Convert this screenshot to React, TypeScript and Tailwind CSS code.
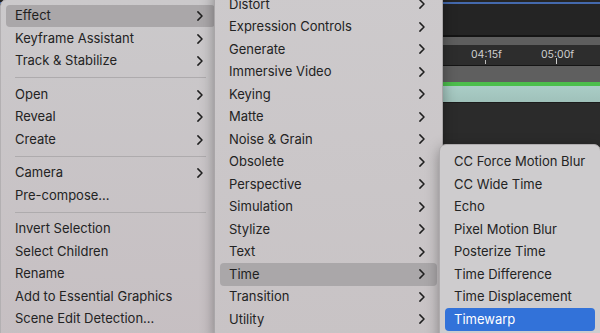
import React from "react";

type Item =
  | { label: string; sub?: boolean; hl?: "gray" | "blue" }
  | "sep";

const menuOne: Item[] = [
  { label: "Effect", sub: true, hl: "gray" },
  { label: "Keyframe Assistant", sub: true },
  { label: "Track & Stabilize", sub: true },
  "sep",
  { label: "Open", sub: true },
  { label: "Reveal", sub: true },
  { label: "Create", sub: true },
  "sep",
  { label: "Camera", sub: true },
  { label: "Pre-compose..." },
  "sep",
  { label: "Invert Selection" },
  { label: "Select Children" },
  { label: "Rename" },
  { label: "Add to Essential Graphics" },
  { label: "Scene Edit Detection..." },
];

const menuTwo: Item[] = [
  "Distort",
  "Expression Controls",
  "Generate",
  "Immersive Video",
  "Keying",
  "Matte",
  "Noise & Grain",
  "Obsolete",
  "Perspective",
  "Simulation",
  "Stylize",
  "Text",
  "Time",
  "Transition",
  "Utility",
].map((label) => ({ label, sub: true, hl: label === "Time" ? ("gray" as const) : undefined }));

const menuThree: Item[] = [
  "CC Force Motion Blur",
  "CC Wide Time",
  "Echo",
  "Pixel Motion Blur",
  "Posterize Time",
  "Time Difference",
  "Time Displacement",
  "Timewarp",
].map((label) => ({ label, hl: label === "Timewarp" ? ("blue" as const) : undefined }));

function Chevron({ white }: { white?: boolean }) {
  return (
    <svg width="6" height="10" viewBox="0 0 6 10" fill="none" className="shrink-0">
      <path
        d="M0.9 0.9L5 5L0.9 9.1"
        stroke={white ? "#fff" : "#1f1f1f"}
        strokeWidth="1.5"
        strokeLinecap="round"
        strokeLinejoin="round"
      />
    </svg>
  );
}

function MenuRows({ items }: { items: Item[] }) {
  return (
    <>
      {items.map((it, i) =>
        it === "sep" ? (
          <div key={i} className="h-[11px] flex items-center px-[14px]">
            <div className="h-px w-full bg-[#aeabad]" />
          </div>
        ) : (
          <div
            key={i}
            className={
              "h-[22.5px] mx-[5px] pl-[9px] pr-[12px] flex items-center justify-between rounded-[4px] " +
              (it.hl === "gray"
                ? "bg-[#aaa7a9] text-[#1f1f1f]"
                : it.hl === "blue"
                ? "bg-[#3272d9] text-white"
                : "text-[#232323]")
            }
          >
            <span className="whitespace-nowrap">{it.label}</span>
            {it.sub && <Chevron white={it.hl === "blue"} />}
          </div>
        )
      )}
    </>
  );
}

export default function App() {
  return (
    <div
      className="relative w-[600px] h-[333px] overflow-hidden bg-[#2a2a2a] text-[13px]"
      style={{ fontFamily: "Inter, 'Noto Sans', sans-serif" }}
    >
      {/* timeline behind the menus */}
      <div className="flex flex-col">
        <div className="h-[2px] bg-[#252525]" />
        <div className="h-[1.5px] bg-[#4469ad]" />
        <div className="h-[31.5px] bg-[#242424]" />
        <div className="h-[2px] bg-[#141414]" />
        <div className="h-[8px] bg-[#5e5e5e]" />
        <div className="relative h-[20px] bg-[#2d2d2d]">
          <span className="absolute left-[471px] top-[2px] text-[10.5px] text-[#cfcfcf]">04:15f</span>
          <span className="absolute left-[541px] top-[2px] text-[10.5px] text-[#cfcfcf]">05:00f</span>
          <div className="absolute left-[485px] top-[15px] w-px h-[4px] bg-[#bdbdbd]" />
          <div className="absolute left-[556px] top-[13px] w-px h-[6px] bg-[#d0d0d0]" />
        </div>
        <div className="h-px bg-[#151515]" />
        <div className="h-[16px] bg-[#5f5f5f]" />
        <div className="h-[4px] bg-[#4cbe4c]" />
        <div className="h-[16px] bg-gradient-to-b from-[#aacdc6] to-[#9fc1ba]" />
        <div className="h-px bg-[#1c1c1c]" />
        <div className="h-[230px] bg-[#2b2b2b]" />
      </div>

      {/* first context menu */}
      <div className="absolute left-0 top-[-1.25px] w-[221px] h-[345px] pt-[5px] rounded-[7px] bg-gradient-to-b from-[#cbc9cb] to-[#c6bfc2] border border-[#b3b0b2] shadow-[0_4px_14px_rgba(0,0,0,0.35)]">
        <MenuRows items={menuOne} />
      </div>

      {/* effect categories */}
      <div className="absolute left-[214px] top-[-13px] w-[229px] h-[352px] pt-[5px] rounded-[7px] bg-gradient-to-b from-[#cdcacc] to-[#c8c3c5] border border-[#a9a6a8] shadow-[0_4px_14px_rgba(0,0,0,0.35)]">
        <MenuRows items={menuTwo} />
      </div>

      {/* time effects */}
      <div className="absolute left-[439px] top-[144px] w-[162px] h-[200px] pt-[5.75px] rounded-[7px] bg-[#ceccce] border border-[#aeabad] shadow-[0_4px_14px_rgba(0,0,0,0.35)]">
        <MenuRows items={menuThree} />
      </div>
    </div>
  );
}
